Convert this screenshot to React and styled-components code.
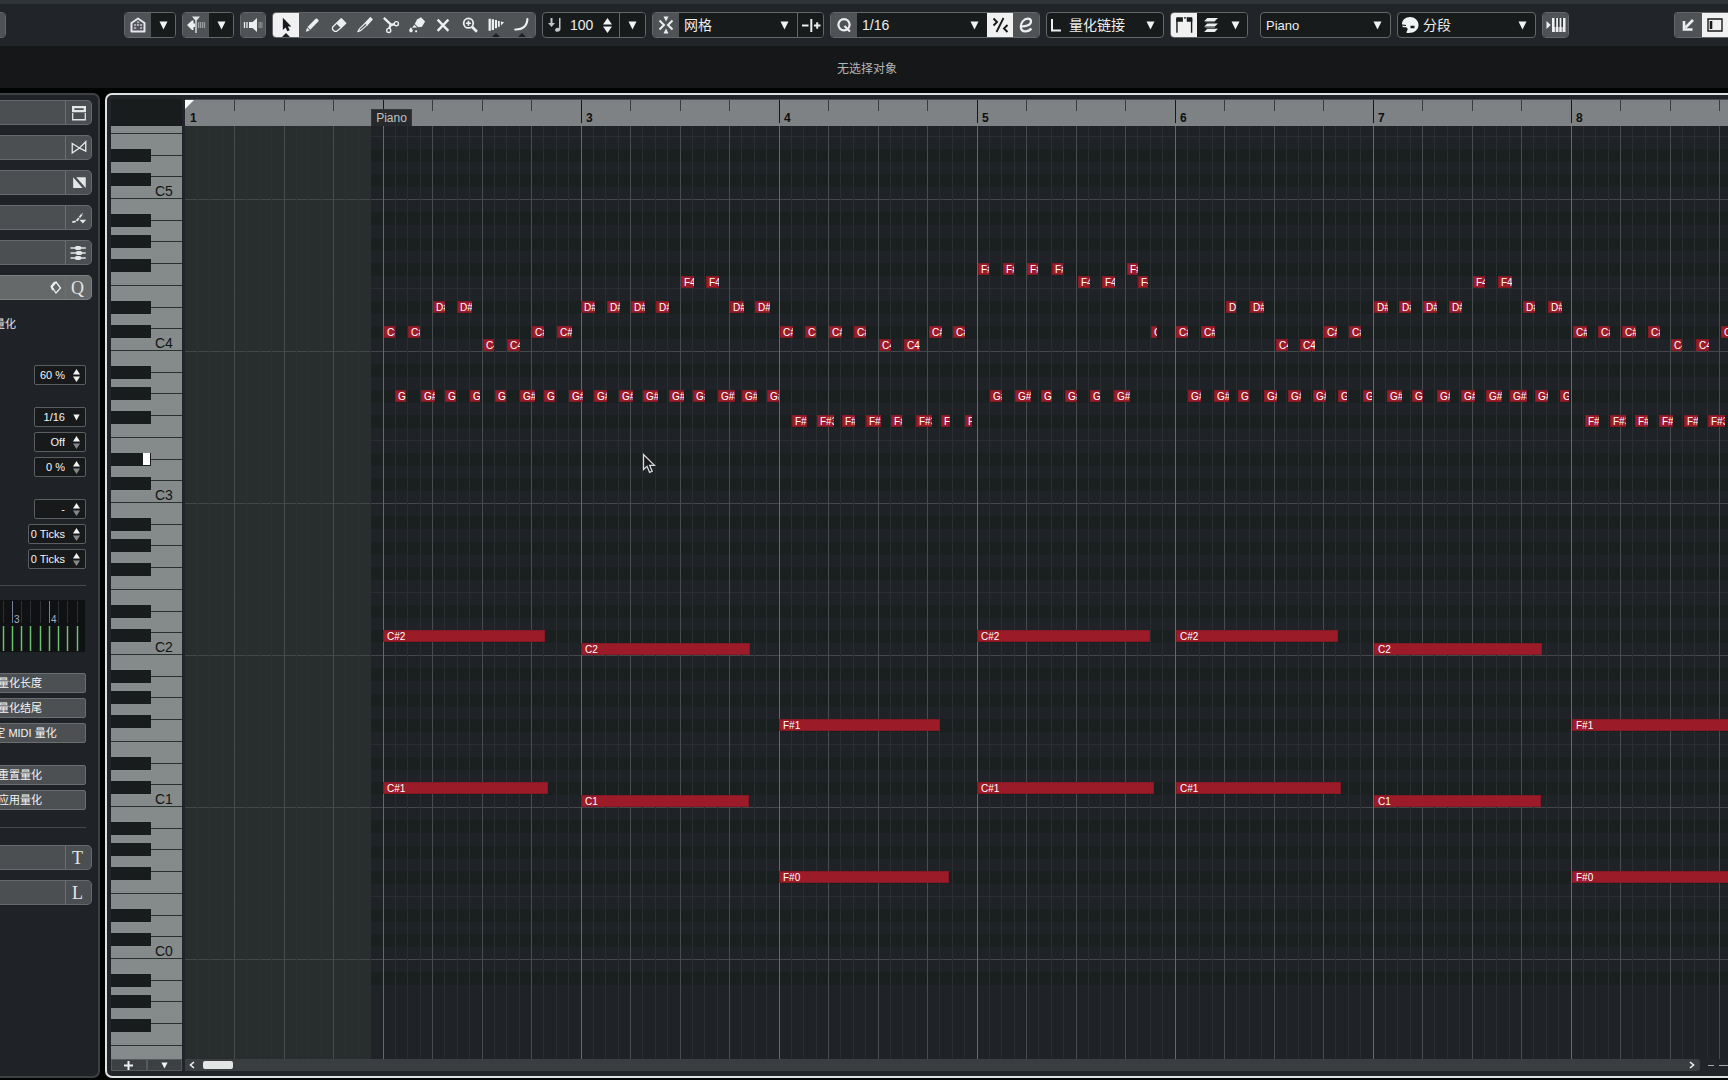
import React from "react";
import styled, { createGlobalStyle } from "styled-components";

const GlobalStyle = createGlobalStyle`
  * {
    box-sizing: border-box;
  }
  body {
    margin: 0;
    background: #020303;
    overflow: hidden;
  }
  body, button, input, select {
    font-family: "Liberation Sans", "Noto Sans CJK SC", sans-serif;
  }
`;

/* ---------- music data ---------- */

const BAR = 198;
const OCTAVE = 152;
const SEMITONE = OCTAVE / 12;
const C5_BOTTOM = 73;
const PART_START = 186;
const NAMES = ["C", "C#", "D", "D#", "E", "F", "F#", "G", "G#", "A", "A#", "B"];

const pitchOf = (name) => {
  const octave = parseInt(name.slice(-1), 10);
  return octave * 12 + NAMES.indexOf(name.slice(0, -1));
};
const bottomOf = (pitch) => Math.round(C5_BOTTOM + (60 - pitch) * SEMITONE);

// [start, length] pairs for every pitch
const NOTES = {
  "F#4": [[793, 11], [818, 11], [842, 11], [867, 11], [942, 11]],
  F4: [
    [496, 13], [521, 13], [893, 12], [917, 13], [953, 10], [1288, 12], [1313, 14],
  ],
  "D#4": [
    [248, 12], [272, 15], [396, 14], [422, 13], [446, 14], [471, 13], [545, 14],
    [570, 15], [1041, 10], [1065, 14], [1189, 14], [1214, 12], [1238, 14],
    [1264, 13], [1338, 12], [1363, 14],
  ],
  "C#4": [
    [199, 11], [223, 12], [347, 12], [372, 15], [595, 13], [620, 11], [644, 13],
    [669, 12], [744, 13], [768, 12], [966, 6], [991, 12], [1016, 14], [1139, 13],
    [1164, 12], [1388, 14], [1413, 12], [1437, 14], [1463, 12], [1536, 14],
  ],
  C4: [
    [298, 11], [322, 13], [694, 12], [719, 16], [1091, 12], [1115, 15],
    [1486, 11], [1511, 13],
  ],
  "G#3": [
    [210, 11], [236, 14], [260, 11], [285, 10], [310, 11], [335, 15], [359, 11],
    [384, 14], [409, 13], [434, 14], [458, 15], [484, 15], [508, 12], [533, 17],
    [557, 15], [582, 12], [805, 12], [830, 16], [856, 11], [880, 12], [905, 10],
    [929, 16], [1003, 13], [1029, 15], [1053, 11], [1079, 13], [1103, 13],
    [1128, 13], [1153, 9], [1178, 9], [1202, 15], [1227, 11], [1252, 13],
    [1276, 14], [1301, 16], [1325, 17], [1350, 13], [1375, 9],
  ],
  "F#3": [
    [607, 15], [632, 17], [657, 13], [681, 15], [706, 11], [731, 16], [756, 9],
    [780, 7], [1400, 14], [1425, 16], [1450, 13], [1474, 14], [1499, 14],
    [1523, 17],
  ],
  "C#2": [[198, 162], [792, 173], [991, 162]],
  C2: [[396, 169], [1189, 168]],
  "F#1": [[594, 161], [1387, 161]],
  "C#1": [[198, 165], [792, 177], [991, 165]],
  C1: [[396, 168], [1189, 167]],
  "F#0": [[594, 170], [1387, 170]],
};

const PITCHES = Array.from({ length: 68 }, (x, i) => 65 - i);
const SIXTEENTHS = Array.from({ length: 256 }, (x, i) => i);
const BEATS = Array.from({ length: 64 }, (x, i) => i);

/* ---------- layout ---------- */

const Window = styled.div`
  display: grid;
  grid-template-rows: 46px 42px 1fr;
  height: 100vh;
  overflow: hidden;
  color: #e4e6e7;
`;

const Toolbar = styled.header`
  display: flex;
  align-items: flex-start;
  gap: 6px;
  padding-top: 8px;
  background: #212529;
  border-top: 4px solid #2f3439;
`;

const InfoLine = styled.div`
  display: flex;
  align-items: center;
  justify-content: center;
  padding-left: 6px;
  background: #161719;
  color: #b3b5b7;
  font-size: 12px;
`;

const Group = styled.div`
  display: flex;
  flex: none;
  width: ${(p) => p.$width}px;
  height: 26px;
  margin-left: ${(p) => p.$before || 0}px;
  overflow: hidden;
  background: #181b1c;
  border: 1px solid #63676a;
  border-radius: 4px;
`;

const WindowTools = styled(Group)`
  margin-left: auto;
  border-right: none;
  border-radius: 4px 0 0 4px;
`;

const ToolButton = styled.button`
  position: relative;
  display: flex;
  flex: ${(p) => (p.$wide ? "1" : "0 0 26px")};
  align-items: center;
  justify-content: center;
  padding: 0;
  border: none;
  border-left: ${(p) => (p.$divided ? "1px solid #63676a" : "none")};
  background: ${(p) => (p.$on ? "#f1f1f2" : p.$dark ? "#181b1c" : "#505356")};
  color: ${(p) => (p.$on ? "#181a1b" : "#eceeef")};
  font-size: 20px;
`;

// little notch on tools that have more than one mode
const Notch = styled.i`
  position: absolute;
  bottom: 0;
  left: 50%;
  margin-left: -4px;
  border: 4px solid transparent;
  border-top: none;
  border-bottom-color: #1c1f21;
`;

const SelectBox = styled.label`
  display: grid;
  flex: 1;
  align-items: center;
  > * {
    grid-area: 1 / 1;
  }
  > svg {
    justify-self: end;
    margin-right: ${(p) => p.$inset || 8}px;
    pointer-events: none;
  }
`;

const Select = styled.select`
  width: 100%;
  height: 24px;
  padding: 0 0 0 ${(p) => p.$indent || 5}px;
  appearance: none;
  border: none;
  outline: none;
  background: transparent;
  color: #eceeef;
  font-size: ${(p) => p.$size || 14}px;
`;

const VelocityInput = styled.input`
  width: 30px;
  padding: 0;
  border: none;
  background: transparent;
  color: #eceeef;
  font-size: 14px;
`;

const Velocity = styled.label`
  display: flex;
  flex: 1;
  align-items: center;
  gap: 8px;
  padding-left: 5px;
`;

const Adornment = styled.span`
  display: flex;
  align-items: center;
  padding-left: ${(p) => p.$pad}px;
`;

const Body = styled.main`
  display: grid;
  grid-template-columns: 100px 1fr;
  gap: 5px;
  min-height: 0;
  padding: 5px 0 2px;
`;

/* ---------- left panel ---------- */

const Panel = styled.aside`
  display: flex;
  flex-direction: column;
  align-items: flex-end;
  overflow: hidden;
  padding-top: 5px;
  background: #1f2327;
  border: 2px solid #3d4144;
  border-left: none;
  border-radius: 0 7px 7px 0;
`;

const Section = styled.button`
  display: flex;
  flex: none;
  align-items: center;
  justify-content: flex-end;
  gap: 3px;
  width: 92px;
  height: 25px;
  margin: 0 6px 10px 0;
  padding: 0;
  background: ${(p) => (p.$open ? "#65696a" : "#4b4f52")};
  border: 1px solid ${(p) => (p.$open ? "#7d8182" : "#66696c")};
  border-left: none;
  border-radius: 0 5px 5px 0;
  color: #e3e5e6;
`;

const SectionIcon = styled.span`
  display: flex;
  align-items: center;
  justify-content: center;
  width: 26px;
  height: 23px;
  padding-right: ${(p) => (p.$letter ? 2 : 0)}px;
  border-left: 1px solid #6b6f71;
  font-family: "Liberation Serif", serif;
  font-size: 18px;
  line-height: 20px;
`;

const Caption = styled.div`
  align-self: flex-start;
  direction: rtl;
  width: 16px;
  margin: 7px 0 33px;
  white-space: nowrap;
  font-size: 11px;
  line-height: 15px;
`;

const Fields = styled.div`
  display: flex;
  flex: none;
  flex-direction: column;
  align-items: flex-end;
  gap: 5px;
  margin: 0 12px ${(p) => p.$after || 22}px 0;
`;

const Field = styled.label`
  display: flex;
  align-items: center;
  justify-content: space-between;
  width: ${(p) => (p.$wide ? 58 : 52)}px;
  height: 20px;
  padding-right: 5px;
  background: #17191b;
  border: 1px solid #5a5e60;
  border-radius: 2px;
`;

const FieldInput = styled.input`
  flex: 1;
  min-width: 0;
  padding: 0 8px 1px 0;
  border: none;
  background: transparent;
  color: #f4f5f5;
  text-align: right;
  font-size: 11px;
`;

const FieldSelect = styled.select`
  flex: 1;
  min-width: 0;
  padding: 0 8px 1px 0;
  appearance: none;
  border: none;
  background: transparent;
  color: #f4f5f5;
  text-align: right;
  text-align-last: right;
  font-size: 11px;
`;

const Rule = styled.hr`
  flex: none;
  width: 86px;
  height: 1px;
  margin: 0 12px ${(p) => p.$after}px 0;
  border: none;
  background: #45494b;
`;

const PreviewBox = styled.div`
  flex: none;
  width: 85px;
  height: 52px;
  margin: 0 13px 21px 0;
  background: #0f1113;
`;

const ActionButton = styled.button`
  width: 132px;
  height: 20px;
  padding: 0;
  background: #4c5053;
  border: 1px solid #6a6e70;
  border-radius: 2px;
  color: #f4f5f5;
  font-size: 11px;
  line-height: 16px;
`;

/* ---------- key editor ---------- */

const Editor = styled.section`
  display: grid;
  grid-template-columns: 71px 1fr;
  grid-template-rows: 27px 1fr 12px;
  column-gap: 3px;
  min-width: 0;
  min-height: 0;
  margin-right: -10px;
  padding: 4px 8px 5px 4px;
  background: #212429;
  border: 2px solid #dfe2e3;
  border-radius: 7px;
`;

const Corner = styled.div`
  background: #191c1d;
`;

const Ruler = styled.div`
  position: relative;
  overflow: hidden;
  background: #7e8285;
  border-top: 1px solid #46494c;
  color: #0d0f10;
  font-size: 12px;
  font-weight: bold;
`;

const Tick = styled.span`
  position: absolute;
  top: 0;
  height: ${(p) => (p.$bar ? 23 : 8)}px;
  padding: 11px 0 0 4px;
  line-height: 14px;
  border-left: 1px solid ${(p) => (p.$bar ? "#16191a" : "#3a3d40")};
`;

const FirstBar = styled.span`
  position: absolute;
  top: 11px;
  left: 5px;
  line-height: 14px;
`;

const Locator = styled.i`
  position: absolute;
  top: 0;
  left: 0;
  border-top: 9px solid #fff;
  border-right: 9px solid transparent;
`;

const PartTag = styled.span`
  position: absolute;
  top: 9px;
  left: 186px;
  width: 41px;
  height: 18px;
  background: #272a2d;
  border: 1px solid #34383a;
  color: #bfc1c2;
  text-align: center;
  font-size: 12px;
  font-weight: normal;
  line-height: 16px;
`;

const Keyboard = styled.div`
  overflow: hidden;
  background: #858b8a;
`;

const KeyboardStrip = styled.div`
  margin-top: -79px;
`;

const Octave = styled.div`
  position: relative;
  display: grid;
  grid-template-rows: repeat(7, minmax(0, 1fr));
  height: ${OCTAVE}px;
`;

const WhiteKey = styled.div`
  display: flex;
  align-items: flex-end;
  border-bottom: 1px solid #2b3031;
  color: #111414;
  padding-left: 44px;
  font-size: 14px;
  line-height: 14px;
`;

const BlackKey = styled.div`
  position: absolute;
  left: 0;
  width: 40px;
  height: 13px;
  background: #191c1d;
`;

const PressedMark = styled.i`
  display: block;
  width: 7px;
  height: 12px;
  margin-left: 32px;
  background: #fff;
`;

const Canvas = styled.div`
  position: relative;
  overflow: hidden;
  background: #1f2327;
`;

const BlackRow = styled.div`
  position: absolute;
  left: 0;
  right: 0;
  height: 13px;
  background: #1a1f20;
`;

const Outside = styled.div`
  position: absolute;
  top: 0;
  bottom: 0;
  left: 0;
  width: ${PART_START}px;
  background: #282d2d;
`;

const RowLine = styled.div`
  position: absolute;
  left: 0;
  right: 0;
  height: 1px;
  background: ${(p) => (p.$octave ? "#43474a" : "#2a2e31")};
`;

const LINE_COLORS = {
  bar: "#65696b",
  beat: "#484c4e",
  step: "#2a2e31",
  faint: "#2d3231",
};

const TimeLine = styled.div`
  position: absolute;
  top: 0;
  bottom: 0;
  width: 1px;
  background: ${(p) => LINE_COLORS[p.$kind]};
`;

const Note = styled.div`
  position: absolute;
  height: 12px;
  padding-left: ${(p) => (p.$long ? 4 : 3)}px;
  overflow: hidden;
  background: #9b1b28;
  box-shadow: inset 0 0 0 1px #84182400, inset 0 0 0 1px #841824;
  color: #fff;
  font-size: 10px;
  line-height: 13px;
  white-space: nowrap;
`;

const Pointer = styled.svg`
  position: absolute;
  top: 327px;
  left: 457px;
`;

const LaneButtons = styled.div`
  display: flex;
`;

const LaneButton = styled.button`
  display: flex;
  flex: 1;
  align-items: center;
  justify-content: center;
  padding: 0;
  background: #3c4042;
  border: 1px solid #565a5c;
  color: #f0f0f0;
`;

const ScrollRow = styled.div`
  display: flex;
  gap: 8px;
`;

const ScrollTrack = styled.div`
  display: flex;
  flex: 1;
  align-items: center;
  gap: 8px;
  padding: 0 5px 0 4px;
  background: #3a3e40;
  border-radius: 0 3px 3px 0;
`;

const ScrollThumb = styled.div`
  width: 30px;
  height: 8px;
  margin-right: auto;
  background: #e3e5e5;
  border-radius: 2px;
`;

const ScrollArrow = styled.button`
  display: flex;
  padding: 0;
  border: none;
  background: none;
  color: #f0f0f0;
`;

const ZoomControl = styled.div`
  display: flex;
  align-items: center;
  gap: 5px;
  width: 20px;
  &::before,
  &::after {
    content: "";
    width: 6px;
    height: 1px;
    background: #a5a8a9;
  }
  &::after {
    flex: 1;
  }
`;

/* ---------- icons ---------- */

const Down = ({ small }) => (
  <svg width={small ? 7 : 9} height={small ? 7 : 9} viewBox="0 0 9 9">
    <path d="M0.500 0.500h8L4.500 8.500z" fill="#f2f3f3" />
  </svg>
);

const UpDown = ({ size = 8, dim }) => (
  <svg width={size} height={size + 6} viewBox="0 0 8 14" preserveAspectRatio="none">
    <path d="M0 6L4 0l4 6z" fill="#f2f3f3" />
    <path d="M0 8l4 6 4-6z" fill={dim ? "#85898b" : "#f2f3f3"} />
  </svg>
);

const Icon = ({ size = 20, children }) => (
  <svg width={size} height={size} viewBox="0 0 20 20" fill="none" stroke="currentColor" strokeWidth="2">
    {children}
  </svg>
);

const TOOLS = [
  {
    name: "选择",
    on: true,
    notch: true,
    icon: <path d="M6.500 2v13.500l3-2.700 2 4.200 2.600-1.200-2-4H16z" fill="currentColor" stroke="none" />,
  },
  {
    name: "铅笔",
    icon: (
      <g fill="currentColor" stroke="none">
        <path d="M3 17.500l1.500-4.500 3 3z" />
        <path d="M5 12.300L14 3l1.500-.3 1.800 1.800-.3 1.500L8 15.300z" />
      </g>
    ),
  },
  {
    name: "橡皮",
    icon: (
      <g strokeWidth="1.400" strokeLinejoin="round">
        <path d="M7.500 7.800l5-4.800 5 5-5 4.800z" fill="currentColor" />
        <path d="M7.500 7.800L2.800 12.500v2.500L5 17h2.500l5-4.200" />
      </g>
    ),
  },
  {
    name: "修剪",
    icon: (
      <g strokeWidth="1.300" strokeLinejoin="round">
        <path d="M10.500 7.800l5.500-6 2 2-5.500 6z" fill="currentColor" />
        <path d="M10.500 7.800L4 14l-2 3.500L5.500 16l7-6.200" />
      </g>
    ),
  },
  {
    name: "分割",
    icon: (
      <g strokeWidth="1.500">
        <path d="M2 2l8 7.500M9.500 10l-1.500 4M10 10l4-1" strokeWidth="2.600" />
        <circle cx="16" cy="8.500" r="2.300" />
        <circle cx="7.500" cy="16" r="2.300" />
      </g>
    ),
  },
  {
    name: "胶合",
    icon: (
      <g fill="currentColor" stroke="none">
        <path d="M10 4l4.500-2.500L19 6l-3.500 6-4 .5L7.500 9z" />
        <path d="M6.800 9.800l3.500 3L5.500 13l-1 .5z" />
        <path d="M3.300 12.500c1.700 2.200 2 3 2 3.700a2 2 0 01-4 0c0-.7.300-1.500 2-3.700z" />
        <circle cx="9" cy="17" r="1.200" />
      </g>
    ),
  },
  { name: "静音", icon: <path d="M4 4l12 12.500M16 4L4 16.500" strokeWidth="2.600" /> },
  {
    name: "缩放",
    icon: (
      <g>
        <circle cx="8.300" cy="8" r="5.300" />
        <path d="M12.200 12l5.500 5.500" strokeWidth="3" />
        <path d="M5.500 8h5.600M8.300 5.200v5.600" strokeWidth="1.800" />
      </g>
    ),
  },
  {
    name: "斜坡",
    notch: true,
    icon: (
      <g strokeWidth="2.600">
        <path d="M3 3v13.500M6.500 3.500v12" />
        <path d="M10 4.500v9" strokeWidth="2.400" />
        <path d="M13.200 5.500v6.500" strokeWidth="2" />
        <path d="M15.500 6l3.500 1-3.500 3.500z" fill="currentColor" stroke="none" />
      </g>
    ),
  },
  {
    name: "曲线",
    notch: true,
    icon: <path d="M2.500 15c8 .5 13-3.500 13.500-11.500" strokeWidth="2.400" strokeLinecap="round" />,
  },
];

const HomeIcon = () => (
  <Icon>
    <path d="M3.500 8L10 3.500 16.500 8v8.500h-13z" stroke="#e5e4ef" strokeLinejoin="round" />
    <path d="M9 7.300h2.200M6 10h2.200M9 10h2.200M12 10h2.200M6 13h2.200M12 13h2.200" stroke="#a9a9b6" strokeWidth="2" />
  </Icon>
);

const AutoscrollIcon = () => (
  <Icon>
    <path d="M1 10l5-4.500h1.500V8.500H9v3.500H7.500v3H6z" fill="currentColor" stroke="none" />
    <path d="M6 1.500h8L10.700 5.500V18H9.300V5.500z" fill="#e0e2e3" stroke="none" />
    <path d="M12.500 7v6M14.500 7v6M16.500 7v6M18.500 7v6" stroke="#989c9e" strokeWidth="1.300" />
  </Icon>
);

const SpeakerIcon = () => (
  <Icon>
    <path d="M1.500 7v6M4 7v6" strokeWidth="1.300" />
    <path d="M6 7h3.500L14 3v14l-4.500-4H6z" fill="currentColor" stroke="none" />
    <path d="M16 7v6M17.500 7v6M19 7v6" stroke="#85898b" strokeWidth="1.200" />
  </Icon>
);

const VelocityIcon = () => (
  <svg width="14" height="16" viewBox="0 0 14 16" fill="#c3c6c7">
    <path d="M2.500 1h2v5H7l-3.500 4L0 6h2.500z" />
    <path d="M11 1h1.500v11c0 1.700-1.500 2.800-3 2.800s-2.500-.8-2.500-1.900 1.200-2.200 2.700-2.200l1.300.2z" />
  </svg>
);

const SnapIcon = () => (
  <Icon>
    <path d="M3.500 5.500l4.500 4.500-4.500 4.500M16.500 5.500L12 10l4.500 4.500" />
    <path d="M7.500 1.500h5L10 6.500zM7.500 18.500h5L10 13.500z" fill="currentColor" stroke="none" />
  </Icon>
);

const SnapTypeIcon = () => (
  <Icon>
    <path d="M1 10.500h6.500M10.300 4v13M13 10.500h6.500M16.200 7.300v6.400" />
  </Icon>
);

const IterativeIcon = () => (
  <Icon>
    <path d="M13.500 3l-7 14" strokeWidth="1.800" />
    <path d="M3.500 3.500L7 7l-3.500 3.500M17.500 10L14 13.500l3.500 3.500" strokeWidth="1.900" />
  </Icon>
);

const QIcon = () => (
  <Icon>
    <circle cx="10" cy="9.800" r="5.600" strokeWidth="2.200" />
    <path d="M10.500 11l5.500 5.500" strokeWidth="2.200" />
  </Icon>
);

const EIcon = () => (
  <Icon>
    <path d="M5 11.500c5.500 0 10-1.500 10-5 0-1.800-1.400-2.900-3.200-2.900C8 3.600 4.800 7.800 4.800 11.500c0 3 1.700 4.900 4.600 4.900 2.200 0 4.500-1 6-2.900" strokeWidth="2.200" />
  </Icon>
);

const PanelsIcon = () => (
  <Icon size={22}>
    <path d="M3 3h6v4H3zM12.500 3h5v4h-5z" fill="currentColor" stroke="none" />
    <path d="M3.600 4v13M12 3.500h-2M16.900 4v13" strokeWidth="1.300" />
  </Icon>
);

const StackIcon = () => (
  <svg width="17" height="17" viewBox="0 0 16 16" fill="#eceeef">
    <path d="M5 1h10l-3 3H2zM5 6h10l-3 3H2z" />
    <path d="M5 11h10l-3 3H2z" />
    <path d="M3 4.500h9M3 9.500h9" stroke="#85898b" />
  </svg>
);

const PaletteIcon = () => (
  <svg width="18" height="18" viewBox="0 0 18 18">
    <path d="M1 8C1 4 4.500 1 9 1s8.500 3.300 8.500 8c0 4.500-4 8-10 8-1.500 0-2.500-.3-2-1.300 1-1.200 1.500-2.700.7-3.700-.8-.8-2.200-.5-3.700-.7C1.200 11 1 9.500 1 8z" fill="#f2f3f3" />
    <path d="M9.500 9.800h4v2.400h-4z" fill="#181b1c" />
    <path d="M0 8.800l5 .7" stroke="#181b1c" strokeWidth="1.200" />
  </svg>
);

const KeysIcon = () => (
  <Icon>
    <path d="M0.500 6l4.200 4-4.200 4z" fill="currentColor" stroke="none" />
    <path d="M6 3h13.500v14H6z" fill="currentColor" stroke="none" />
    <path d="M9.400 3v9M12.800 3v9M16.200 3v9" stroke="#303335" strokeWidth="1.600" />
    <path d="M9.400 11v6M12.800 11v6M16.200 11v6" stroke="#505356" strokeWidth="0.800" />
  </Icon>
);

const CollapseIcon = () => (
  <Icon>
    <path d="M15 5l-7.500 7.500M6 6v8.500h8.500" strokeWidth="2.600" />
  </Icon>
);

const ZonesIcon = () => (
  <Icon>
    <path d="M3 4h14v12H3z" strokeWidth="1.400" />
    <path d="M6 6v8" strokeWidth="2.600" />
  </Icon>
);

const SECTIONS = [
  {
    name: "和弦编辑",
    icon: (
      <Icon size={18}>
        <path d="M3.500 3.500h13v4.500h-13z" strokeWidth="2.600" />
        <path d="M3 10v7.500h14V10" strokeWidth="1.400" />
      </Icon>
    ),
  },
  {
    name: "表情映射",
    icon: (
      <Icon size={18}>
        <path d="M2.500 5l8 5-8 5.500zM17.500 3l-7 7 7 3.500z" strokeWidth="1.500" />
      </Icon>
    ),
  },
  {
    name: "音符表情",
    icon: (
      <Icon size={18}>
        <path d="M3.500 3.500v12H14zM7 3.500h10.500v12z" fill="currentColor" stroke="none" />
      </Icon>
    ),
  },
  {
    name: "和弦垫",
    icon: (
      <Icon size={18}>
        <path d="M2.500 14.500l4.500-1 3-3.500 4-5" strokeWidth="2" strokeDasharray="4 1" />
        <path d="M10.500 12h7.500l-3.700 4z" fill="currentColor" stroke="none" />
      </Icon>
    ),
  },
  {
    name: "和弦辅助",
    icon: (
      <Icon size={18}>
        <path d="M0.500 4.500h17M0.500 10h17M0.500 15.500h17" strokeWidth="1.700" />
        <path d="M7.500 4.500h3M8.500 10h3M7.500 15.500h3" strokeWidth="4.400" strokeLinecap="round" />
      </Icon>
    ),
  },
];

const GREEN_LINES = [3, 12, 21, 30, 40, 49, 58, 67, 77];

const QuantizePreview = () => (
  <PreviewBox>
    <svg width="85" height="52" viewBox="0 0 85 52" fontSize="10" fill="#a3afc2">
      {GREEN_LINES.map((x) => (
        <g key={x} fill="none" strokeWidth="1">
          <path d={`M${x + 0.5} 1v22`} stroke={x === 12 || x === 49 ? "#76839a" : "#2c3138"} />
          <path d={`M${x + 0.5} 26v25`} stroke="#6cc072" strokeWidth="1.500" />
        </g>
      ))}
      <text x="14" y="23">3</text>
      <text x="51" y="23">4</text>
    </svg>
  </PreviewBox>
);

/* ---------- parts ---------- */

const SelectField = ({ label, value, inset, indent, size }) => (
  <SelectBox $inset={inset}>
    <Select aria-label={label} $indent={indent} $size={size}>
      <option>{value}</option>
    </Select>
    <Down />
  </SelectBox>
);

const NumberField = ({ label, value, wide, dim = true }) => (
  <Field $wide={wide}>
    <FieldInput aria-label={label} defaultValue={value} />
    <UpDown size={7} dim={dim} />
  </Field>
);

const TopBar = () => (
  <Toolbar>
    <Group $width={26} $before={-20}>
      <ToolButton $wide aria-label="独奏" />
    </Group>
    <Group $width={52} $before={112}>
      <ToolButton aria-label="设置"><HomeIcon /></ToolButton>
      <ToolButton $wide $dark aria-label="设置菜单"><Down /></ToolButton>
    </Group>
    <Group $width={52}>
      <ToolButton aria-label="自动滚动"><AutoscrollIcon /></ToolButton>
      <ToolButton $wide $dark aria-label="滚动菜单"><Down /></ToolButton>
    </Group>
    <Group $width={26}>
      <ToolButton $wide aria-label="监听"><SpeakerIcon /></ToolButton>
    </Group>
    <Group $width={264}>
      {TOOLS.map((tool) => (
        <ToolButton key={tool.name} $wide $on={tool.on} aria-label={tool.name}>
          <Icon size={18}>{tool.icon}</Icon>
          {tool.notch && <Notch />}
        </ToolButton>
      ))}
    </Group>
    <Group $width={104}>
      <Velocity>
        <VelocityIcon />
        <VelocityInput aria-label="插入力度" defaultValue="100" />
      </Velocity>
      <Adornment $pad={0}><UpDown size={9} /></Adornment>
      <Adornment $pad={7} />
      <ToolButton $dark $divided aria-label="力度菜单"><Down /></ToolButton>
    </Group>
    <Group $width={172}>
      <ToolButton aria-label="吸附"><SnapIcon /></ToolButton>
      <SelectField label="吸附类型" value="网格" />
      <ToolButton $dark $divided aria-label="网格类型"><SnapTypeIcon /></ToolButton>
    </Group>
    <Group $width={210}>
      <ToolButton aria-label="应用量化"><QIcon /></ToolButton>
      <SelectField label="量化预设" value="1/16" />
      <ToolButton $on aria-label="迭代量化"><IterativeIcon /></ToolButton>
      <ToolButton aria-label="量化面板"><EIcon /></ToolButton>
    </Group>
    <Group $width={118}>
      <Adornment $pad={4}>
        <svg width="10" height="14" viewBox="0 0 10 14">
          <path d="M1 1v11.500h9" fill="none" stroke="#eceeef" strokeWidth="2" />
        </svg>
      </Adornment>
      <SelectField label="长度量化" value="量化链接" indent={8} />
    </Group>
    <Group $width={78}>
      <ToolButton $on aria-label="显示多个部分"><PanelsIcon /></ToolButton>
      <ToolButton $dark aria-label="编辑活动部分"><StackIcon /></ToolButton>
      <ToolButton $wide $dark aria-label="部分菜单"><Down /></ToolButton>
    </Group>
    <Group $width={131} $before={6}>
      <SelectField label="当前部分" value="Piano" size={13} />
    </Group>
    <Group $width={139}>
      <Adornment $pad={3}><PaletteIcon /></Adornment>
      <SelectField label="颜色" value="分段" indent={4} />
    </Group>
    <Group $width={27}>
      <ToolButton $wide aria-label="MIDI 输入"><KeysIcon /></ToolButton>
    </Group>
    <WindowTools $width={54}>
      <ToolButton $wide aria-label="在下部区域打开"><CollapseIcon /></ToolButton>
      <ToolButton $wide $on aria-label="窗口布局"><ZonesIcon /></ToolButton>
    </WindowTools>
  </Toolbar>
);

const Inspector = () => (
  <Panel>
    {SECTIONS.map((section) => (
      <Section key={section.name} aria-label={section.name}>
        <SectionIcon>{section.icon}</SectionIcon>
      </Section>
    ))}
    <Section $open aria-label="量化">
      <svg width="12" height="14" viewBox="0 0 12 14" fill="none" stroke="#eceeef" strokeWidth="1.300">
        <path d="M6 1l4.500 6L6 12 2 6z" />
        <path d="M5 1L1.500 5.500 3 9" strokeWidth="2" />
      </svg>
      <SectionIcon $letter>Q</SectionIcon>
    </Section>
    <Caption>量化</Caption>
    <Fields>
      <NumberField label="量化强度" value="60 %" dim={false} />
    </Fields>
    <Fields>
      <Field>
        <FieldSelect aria-label="量化预设">
          <option>1/16</option>
        </FieldSelect>
        <Down small />
      </Field>
      <NumberField label="连音" value="Off" />
      <NumberField label="摇摆" value="0 %" />
    </Fields>
    <Fields $after={16}>
      <NumberField label="捕捉范围" value="-" />
      <NumberField label="非量化" value="0 Ticks" wide />
      <NumberField label="随机" value="0 Ticks" wide />
    </Fields>
    <Rule $after={14} />
    <QuantizePreview />
    <Fields>
      <ActionButton>量化长度</ActionButton>
      <ActionButton>量化结尾</ActionButton>
      <ActionButton>固定 MIDI 量化</ActionButton>
    </Fields>
    <Fields $after={17}>
      <ActionButton>重置量化</ActionButton>
      <ActionButton>应用量化</ActionButton>
    </Fields>
    <Rule $after={17} />
    <Section aria-label="移调">
      <SectionIcon $letter>T</SectionIcon>
    </Section>
    <Section aria-label="长度">
      <SectionIcon $letter>L</SectionIcon>
    </Section>
  </Panel>
);

const TimeRuler = () => (
  <Ruler>
    {BEATS.slice(1).map((beat) => {
      const bar = beat % 4 === 0;
      return (
        <Tick key={beat} $bar={bar} style={{ left: Math.floor((beat * BAR) / 4) }}>
          {bar && beat > 4 ? beat / 4 + 1 : null}
        </Tick>
      );
    })}
    <Locator />
    <FirstBar>1</FirstBar>
    <PartTag>Piano</PartTag>
  </Ruler>
);

const BLACK_KEYS = [15, 36, 60, 102, 126];

const PianoKeys = () => (
  <Keyboard>
    <KeyboardStrip>
      {[5, 4, 3, 2, 1, 0, -1].map((octave) => (
        <Octave key={octave}>
          {["B", "A", "G", "F", "E", "D"].map((key) => (
            <WhiteKey key={key} />
          ))}
          <WhiteKey>{octave < 0 ? null : `C${octave}`}</WhiteKey>
          {BLACK_KEYS.map((top) => (
            <BlackKey key={top} style={{ top }}>
              {octave === 3 && top === 102 && <PressedMark />}
            </BlackKey>
          ))}
        </Octave>
      ))}
    </KeyboardStrip>
  </Keyboard>
);

const lineKind = (step) => {
  if (step % 16 === 0) return "bar";
  if (step % 4 === 0) return "beat";
  return step < 15 ? "faint" : "step";
};

const NoteCanvas = () => (
  <Canvas>
    {PITCHES.filter((p) => NAMES[(p + 12) % 12].includes("#")).map((p) => (
      <BlackRow key={p} style={{ top: bottomOf(p) - 12 }} />
    ))}
    <Outside />
    {PITCHES.filter((p) => [0, 5].includes((p + 12) % 12)).map((p) => (
      <RowLine key={p} $octave={(p + 12) % 12 === 0} style={{ top: bottomOf(p) }} />
    ))}
    {SIXTEENTHS.slice(1).map((step) => (
      <TimeLine
        key={step}
        $kind={lineKind(step)}
        style={{ left: Math.floor((step * BAR) / 16) }}
      />
    ))}
    {Object.keys(NOTES).map((name) =>
      NOTES[name].map(([left, width]) => (
        <Note
          key={name + left}
          $long={width > 20}
          style={{ left, width, top: bottomOf(pitchOf(name)) - 12 }}
        >
          {name}
        </Note>
      ))
    )}
    <Pointer width="14" height="21" viewBox="0 0 14 21">
      <path
        d="M1.500 1.500v15l3.500-3.200 2.600 6 2.600-1.100-2.500-5.800h4.800z"
        fill="#191b1c"
        stroke="#d8dadb"
        strokeWidth="1.300"
      />
    </Pointer>
  </Canvas>
);

const KeyEditor = () => (
  <Editor>
    <Corner />
    <TimeRuler />
    <PianoKeys />
    <NoteCanvas />
    <LaneButtons>
      <LaneButton aria-label="添加控制器轨道">
        <svg width="9" height="9" viewBox="0 0 9 9">
          <path d="M4.500 0v9M0 4.500h9" stroke="#f0f0f0" strokeWidth="2" />
        </svg>
      </LaneButton>
      <LaneButton aria-label="控制器轨道设置"><Down small /></LaneButton>
    </LaneButtons>
    <ScrollRow>
      <ScrollTrack>
        <ScrollArrow aria-label="向左滚动">
          <svg width="6" height="8" viewBox="0 0 6 8">
            <path d="M5 1L1.500 4 5 7" fill="none" stroke="currentColor" strokeWidth="1.600" />
          </svg>
        </ScrollArrow>
        <ScrollThumb />
        <ScrollArrow aria-label="向右滚动">
          <svg width="6" height="8" viewBox="0 0 6 8">
            <path d="M1 1l3.500 3L1 7" fill="none" stroke="currentColor" strokeWidth="1.600" />
          </svg>
        </ScrollArrow>
      </ScrollTrack>
      <ZoomControl />
    </ScrollRow>
  </Editor>
);

export default function App() {
  return (
    <>
      <GlobalStyle />
      <Window>
        <TopBar />
        <InfoLine>无选择对象</InfoLine>
        <Body>
          <Inspector />
          <KeyEditor />
        </Body>
      </Window>
    </>
  );
}
